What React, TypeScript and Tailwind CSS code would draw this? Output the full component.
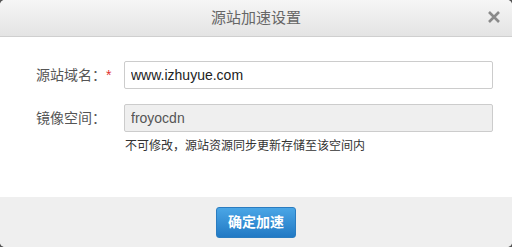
export default function App() {
  return (
    <div className="h-[247px] w-[512px] bg-[#555]" style={{ fontFamily: '"Liberation Sans", "Noto Sans CJK SC", sans-serif' }}>
      <div className="flex h-full w-full flex-col overflow-hidden rounded-[5px] bg-white">
        <div className="relative flex h-[37px] shrink-0 items-center justify-center border-b border-[#cfcfcf] bg-gradient-to-b from-[#f6f6f6] to-[#e4e4e4]">
          <span className="text-[15px] text-[#666]">源站加速设置</span>
          <span className="absolute right-[10px] top-[9px] text-[#8a8a8a]">
            <svg width="16" height="16" viewBox="0 0 16 16">
              <path d="M3 3 L13 13 M13 3 L3 13" stroke="currentColor" strokeWidth="2.6" strokeLinecap="butt" />
            </svg>
          </span>
        </div>
        <div className="flex flex-1 flex-col pl-[36px] pr-[19px] pt-[24px]">
          <div className="flex items-center">
            <label className="w-[88px] text-[14px] text-[#555]">
              源站域名：<span className="text-[#e0312f]">*</span>
            </label>
            <input
              className="h-[28px] flex-1 rounded-[2px] border border-[#ccc] bg-white px-[6px] text-[14px] text-[#222] outline-none"
              defaultValue="www.izhuyue.com"
            />
          </div>
          <div className="mt-[15px] flex items-center">
            <label className="w-[88px] text-[14px] text-[#555]">镜像空间：</label>
            <input
              className="h-[28px] flex-1 rounded-[2px] border border-[#ccc] bg-[#efefef] px-[6px] text-[14px] text-[#555] outline-none"
              defaultValue="froyocdn"
              readOnly
            />
          </div>
          <p className="ml-[89px] mt-[5px] text-[12px] text-[#333]">不可修改，源站资源同步更新存储至该空间内</p>
        </div>
        <div className="flex h-[50px] shrink-0 items-center justify-center bg-[#efefef]">
          <button className="h-[31px] w-[80px] rounded-[3px] border border-[#2a7cc0] bg-gradient-to-b from-[#4aa6e6] to-[#2179c4] text-[14px] font-bold text-white">
            确定加速
          </button>
        </div>
      </div>
    </div>
  );
}
